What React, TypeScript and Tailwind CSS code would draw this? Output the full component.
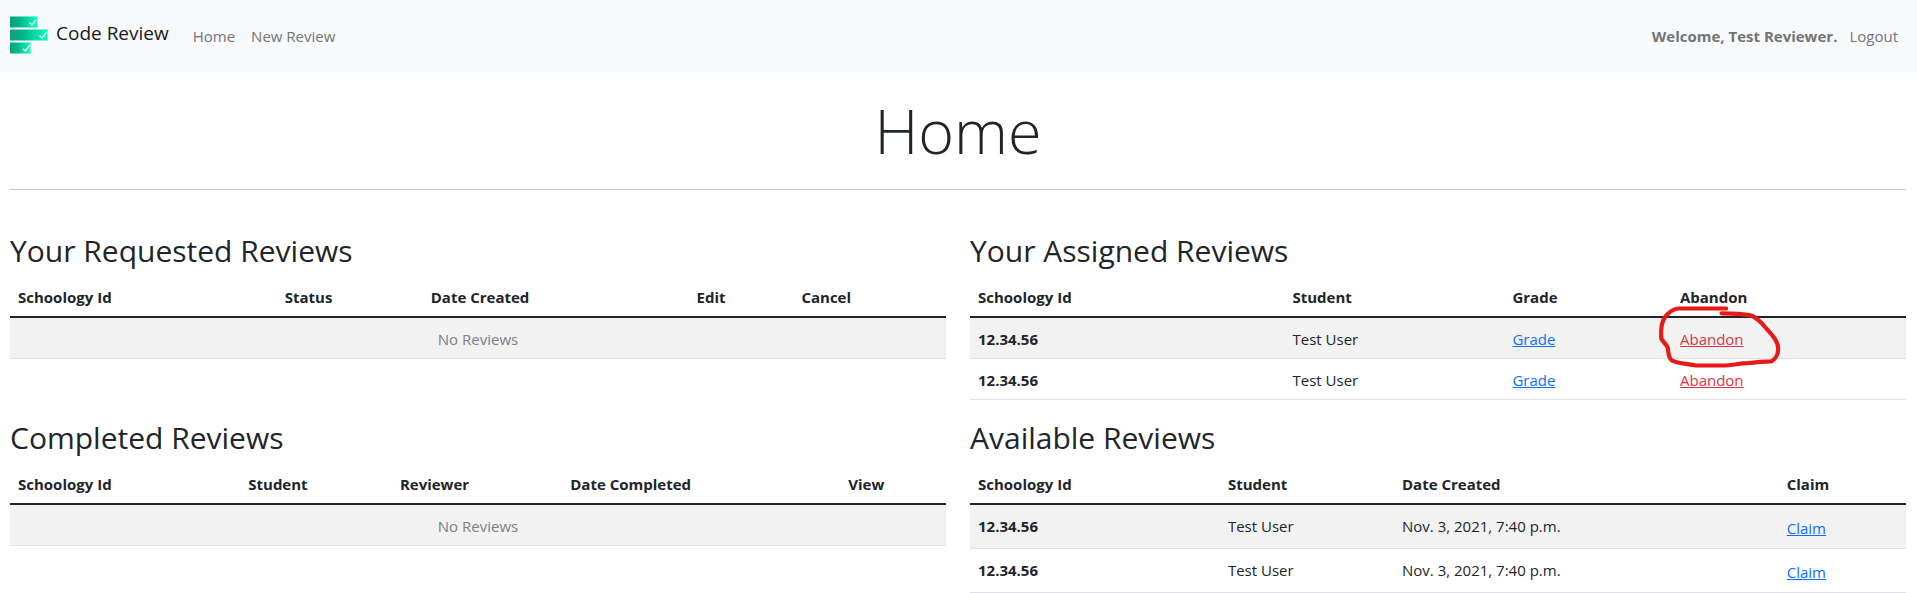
import type { ReactNode } from "react";

const link = "text-[#0d6efd] underline";
const dangerLink = "text-[#dc3545] underline";
const cell = "px-2 pb-[7px] pt-[9px]";

function Logo() {
  return (
    <svg viewBox="0 0 38 38" className="size-[38px] shrink-0" aria-hidden="true">
      <defs>
        <linearGradient id="bar" x1="0" x2="1" y1="0" y2="0">
          <stop offset="0" stopColor="#08a07a" />
          <stop offset="0.35" stopColor="#07b48a" />
          <stop offset="1" stopColor="#00ffbe" />
        </linearGradient>
      </defs>
      <g fill="url(#bar)">
        <rect x="0" y="0" width="28" height="12" opacity="0.5" />
        <rect x="0" y="13" width="38" height="12" opacity="0.5" />
        <rect x="0" y="26" width="21" height="12" opacity="0.5" />
        <rect x="0" y="1" width="27" height="10" />
        <rect x="0" y="14" width="37" height="10" />
        <rect x="0" y="27" width="20" height="10" />
      </g>
      <g fill="none" stroke="#f2fffb" strokeWidth="1.4">
        <path d="M19.6 6.6l2.4 2.6 4.4-6" />
        <path d="M29.6 19.6l2.4 2.6 4.4-6" />
        <path d="M12.9 32.6l2.4 2.6 4.4-6" />
      </g>
    </svg>
  );
}

function PenCircle() {
  return (
    <svg
      viewBox="0 0 130 75"
      className="pointer-events-none absolute -left-[17px] -top-[18px] h-[75px] w-[130px]"
      fill="none"
      stroke="#e81919"
      strokeWidth="4.2"
      strokeLinecap="round"
      strokeLinejoin="round"
      aria-hidden="true"
    >
      <path d="M71.3 8.5H24C19 8.5 16.500 10.500 13 13.700C8 18 6.500 24 6.200 30V38.500C8 42 11.500 44 12.800 48C13.800 52 12.500 57 17 60.500C22 63.500 33 63.800 41 65.500H71C80 65 84 63.500 92 63.200C101 62 108 61.800 116.500 61.300C120.500 59 123 54 123.200 50C123.500 45 121.500 41.500 120 39C116 33 111 28.500 107 23.500C103 19.500 99.500 16 95.500 15.400C87 13.500 77 13.300 66.500 13.300" />
    </svg>
  );
}

type Column = { label: string; width: string };

function ReviewTable({ title, columns, children }: { title: string; columns: Column[]; children?: ReactNode }) {
  return (
    <section className="mb-[17px]">
      <h2 className="mb-1.5 pt-0.5 text-[30px] leading-[38px]">{title}</h2>
      <table className="w-full table-fixed border-collapse text-left">
        <thead className="border-b-2 border-[#212529]">
          <tr>
            {columns.map((c) => (
              <th key={c.label} scope="col" className={`${c.width} ${cell} font-bold`}>
                {c.label}
              </th>
            ))}
          </tr>
        </thead>
        <tbody>
          {children ?? (
            <Row>
              <td colSpan={columns.length} className={`${cell} text-center text-[#7c8084]`}>
                No Reviews
              </td>
            </Row>
          )}
        </tbody>
      </table>
    </section>
  );
}

function Row({ children }: { children: ReactNode }) {
  return <tr className="border-b border-[#dee2e6] align-top odd:bg-[#f2f2f2]">{children}</tr>;
}

const requested: Column[] = [
  { label: "Schoology Id", width: "w-[28.5%]" },
  { label: "Status", width: "w-[15.6%]" },
  { label: "Date Created", width: "w-[28.4%]" },
  { label: "Edit", width: "w-[11.2%]" },
  { label: "Cancel", width: "w-[16.3%]" },
];

const assigned: Column[] = [
  { label: "Schoology Id", width: "w-[33.6%]" },
  { label: "Student", width: "w-[23.5%]" },
  { label: "Grade", width: "w-[17.9%]" },
  { label: "Abandon", width: "w-[25%]" },
];

const completed: Column[] = [
  { label: "Schoology Id", width: "w-[24.6%]" },
  { label: "Student", width: "w-[16.2%]" },
  { label: "Reviewer", width: "w-[18.2%]" },
  { label: "Date Completed", width: "w-[29.7%]" },
  { label: "View", width: "w-[11.3%]" },
];

const available: Column[] = [
  { label: "Schoology Id", width: "w-[26.7%]" },
  { label: "Student", width: "w-[18.6%]" },
  { label: "Date Created", width: "w-[41.1%]" },
  { label: "Claim", width: "w-[13.6%]" },
];

const reviews = [
  { id: "12.34.56", student: "Test User", created: "Nov. 3, 2021, 7:40 p.m.", circled: true },
  { id: "12.34.56", student: "Test User", created: "Nov. 3, 2021, 7:40 p.m.", circled: false },
];

export default function App() {
  return (
    <div className="bg-white font-['Open_Sans','Noto_Sans',sans-serif] text-[15px] leading-6 text-[#212529]">
      <nav className="flex h-[72px] items-center bg-[#f8f9fa] pl-2.5 pr-[19px] text-[#737475]">
        <a href="#" className="mr-6 flex items-center gap-2 pb-0.5 text-[#191919]">
          <Logo />
          <span className="pb-1 text-[19px]">Code Review</span>
        </a>
        <a href="#" className="mr-4">Home</a>
        <a href="#">New Review</a>
        <strong className="ml-auto mr-3 font-bold">Welcome, Test Reviewer.</strong>
        <a href="#">Logout</a>
      </nav>
      <main className="pl-2.5 pr-[11px]">
        <h1 className="py-5 text-center text-[61px] font-light leading-[77px]">Home</h1>
        <hr className="mb-10 border-[#c8c9ca]" />
        <div className="grid grid-cols-2 gap-x-6">
          <ReviewTable title="Your Requested Reviews" columns={requested} />
          <ReviewTable title="Your Assigned Reviews" columns={assigned}>
            {reviews.map((r, i) => (
              <Row key={i}>
                <th scope="row" className={`${cell} font-bold`}>{r.id}</th>
                <td className={cell}>{r.student}</td>
                <td className={cell}>
                  <a href="#" className={link}>Grade</a>
                </td>
                <td className={`relative ${cell}`}>
                  <a href="#" className={dangerLink}>Abandon</a>
                  {r.circled && <PenCircle />}
                </td>
              </Row>
            ))}
          </ReviewTable>
          <ReviewTable title="Completed Reviews" columns={completed} />
          <ReviewTable title="Available Reviews" columns={available}>
            {reviews.map((r, i) => (
              <Row key={i}>
                <th scope="row" className={`${cell} font-bold`}>{r.id}</th>
                <td className={cell}>{r.student}</td>
                <td className={cell}>{r.created}</td>
                <td className="px-2 pb-2 pt-[11px]">
                  <button type="button" className={link}>Claim</button>
                </td>
              </Row>
            ))}
          </ReviewTable>
        </div>
      </main>
    </div>
  );
}
